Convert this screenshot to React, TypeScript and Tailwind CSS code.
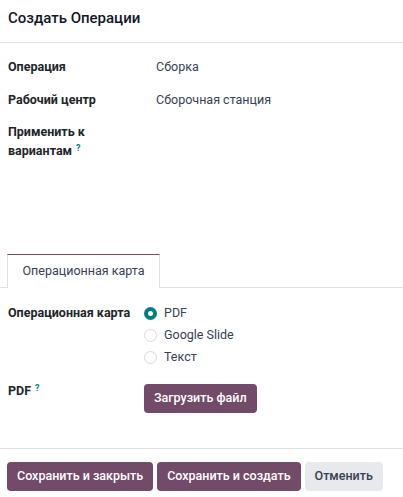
const FONT = "font-['Roboto',_'Noto_Sans',_sans-serif]";

function Help() {
  return <sup className="ml-1 text-[9px] font-bold text-[#017e84]">?</sup>;
}

function Radio({ checked, label }: { checked?: boolean; label: string }) {
  return (
    <label className="flex h-[22px] items-center gap-[7px]">
      {checked ? (
        <span className="flex h-[13px] w-[13px] items-center justify-center rounded-full bg-[#017e84]">
          <span className="h-[5px] w-[5px] rounded-full bg-white" />
        </span>
      ) : (
        <span className="h-[13px] w-[13px] rounded-full border border-[#d8dadd] bg-white" />
      )}
      <span className="text-[#374151]">{label}</span>
    </label>
  );
}

export default function App() {
  return (
    <div className={`${FONT} h-[497px] w-[403px] bg-white text-[12.5px] text-[#212529]`}>
      <div className="flex h-[43px] items-center border-b border-[#dee2e6] px-2 pb-[5px]">
        <h1 className="text-[15px] font-medium text-[#111827]">Создать Операции</h1>
      </div>

      <div className="grid grid-cols-[128px_1fr] gap-x-2 px-2 pt-[13px]">
        <div className="h-[33px] pt-[2px] font-bold">Операция</div>
        <div className="pl-3 pt-[2px] text-[#374151]">Сборка</div>
        <div className="h-[33px] pt-[2px] font-bold">Рабочий центр</div>
        <div className="pl-3 pt-[2px] text-[#374151]">Сборочная станция</div>
        <div className="h-[121px] font-bold leading-[19px]">
          Применить к
          <br />
          вариантам
          <Help />
        </div>
        <div />
      </div>

      <div className="mt-[11px] flex border-b border-[#dee2e6] pl-[7px]">
        <div className="-mb-px flex h-[34px] w-[153px] items-center justify-center border-x border-t border-[#dee2e6] border-t-[#714b67] bg-white text-[#374151]">
          Операционная карта
        </div>
      </div>

      <div className="grid grid-cols-[128px_1fr] gap-x-2 px-2 pt-[14px]">
        <div className="pt-[2px] font-bold">Операционная карта</div>
        <div className="flex flex-col">
          <Radio checked label="PDF" />
          <Radio label="Google Slide" />
          <Radio label="Текст" />
        </div>
        <div className="pt-[14px] font-bold">
          PDF
          <Help />
        </div>
        <div className="pt-[16px]">
          <button className="h-[29px] rounded bg-[#714b67] px-[10px] font-medium text-white">
            Загрузить файл
          </button>
        </div>
      </div>

      <div className="mt-[35px] flex gap-1 border-t border-[#dee2e6] px-[7px] pt-[13px]">
        <button className="h-[29px] rounded bg-[#714b67] px-[10px] font-medium text-white">
          Сохранить и закрыть
        </button>
        <button className="h-[29px] rounded bg-[#714b67] px-[10px] font-medium text-white">
          Сохранить и создать
        </button>
        <button className="h-[29px] rounded bg-[#e7e9ed] px-[10px] font-medium text-[#374151]">
          Отменить
        </button>
      </div>
    </div>
  );
}
